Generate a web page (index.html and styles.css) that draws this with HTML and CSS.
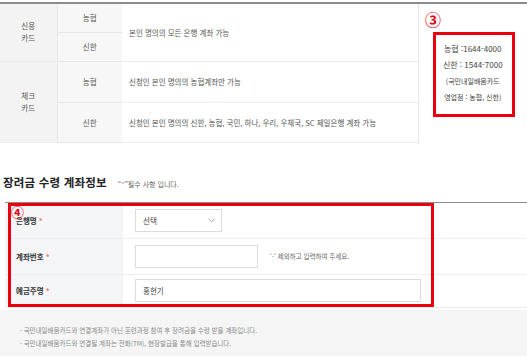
FILE: index.html
```html
<!DOCTYPE html>
<html lang="ko">
<head>
<meta charset="utf-8">
<link rel="stylesheet" href="styles.css">
</head>
<body>
<div class="page">
  <table class="card-table">
    <colgroup>
      <col class="c-cat"><col class="c-bank"><col class="c-desc"><col class="c-tel">
    </colgroup>
    <tr class="r1">
      <td class="cat" rowspan="2">신용<br>카드</td>
      <td class="bank">농협</td>
      <td class="desc" rowspan="2">본인 명의의 모든 은행 계좌 가능</td>
      <td class="tel" rowspan="4">
        <p class="tel-big">농협 :1644-4000</p>
        <p class="tel-big">신한 : 1544-7000</p>
        <p class="tel-small">(국민내일배움카드</p>
        <p class="tel-small">영업점 : 농협, 신한)</p>
      </td>
    </tr>
    <tr class="r2">
      <td class="bank">신한</td>
    </tr>
    <tr class="r3">
      <td class="cat" rowspan="2">체크<br>카드</td>
      <td class="bank">농협</td>
      <td class="desc">신청인 본인 명의의 농협계좌만 가능</td>
    </tr>
    <tr class="r4">
      <td class="bank">신한</td>
      <td class="desc">신청인 본인 명의의 신한, 농협, 국민, 하나, 우리, 우체국, SC 제일은행 계좌 가능</td>
    </tr>
  </table>

  <div class="section-head">
    <h2 class="title">장려금 수령 계좌정보</h2>
    <span class="req-note">“<span class="star">*</span>”필수 사항 입니다.</span>
  </div>

  <table class="form-table">
    <tr class="f1">
      <th>은행명 <span class="star">*</span></th>
      <td>
        <div class="select"><span>선택</span><svg class="chev" width="7" height="5" viewBox="0 0 7 5"><path d="M0.5 0.8 L3.5 3.8 L6.5 0.8" fill="none" stroke="#999" stroke-width="0.9"/></svg></div>
      </td>
    </tr>
    <tr class="f2">
      <th>계좌번호 <span class="star">*</span></th>
      <td>
        <div class="field-line"><div class="input acct"></div><span class="hint">'-' 제외하고 입력하여 주세요.</span></div>
      </td>
    </tr>
    <tr class="f3">
      <th>예금주명 <span class="star">*</span></th>
      <td>
        <div class="input name">홍현기</div>
      </td>
    </tr>
  </table>

  <div class="notice">
    <p>· 국민내일배움카드와 연결계좌가 아닌 훈련과정 참여 후 장려금을 수령 받을 계좌입니다.</p>
    <p>· 국민내일배움카드와 연결될 계좌는 전화(TM), 현장발급을 통해 입력받습니다.</p>
  </div>

  <span class="mark mark3">③</span>
  <div class="redbox box3"></div>
  <div class="redbox box4"></div>
  <span class="mark mark4">④</span>
</div>
</body>
</html>
```

FILE: styles.css
```css
html, body {
  margin: 0;
  padding: 0;
  background: #fff;
}
body {
  font-family: "Noto Sans CJK KR", "Noto Sans", sans-serif;
  color: #555;
}
.page {
  position: relative;
  width: 527px;
  height: 358px;
  overflow: hidden;
  padding-top: 2px;
  box-sizing: border-box;
}

/* top table */
.card-table {
  width: 527px;
  border-collapse: collapse;
  border-top: 2px solid #8c8c8c;
  table-layout: fixed;
  font-size: 7.5px;
}
.c-cat { width: 57px; }
.c-bank { width: 65px; }
.c-desc { width: 296px; }
.c-tel { width: 109px; }
.card-table td {
  padding: 0;
  vertical-align: middle;
  border-bottom: 1px solid #ececec;
}
.card-table tr.r1 { height: 29px; }
.card-table tr.r2 { height: 29px; }
.card-table tr.r3 { height: 41px; }
.card-table tr.r4 { height: 40px; }
.card-table .cat {
  background: #f3f3f3;
  text-align: center;
  line-height: 12px;
  border-right: 1px solid #e9e9e9;
}
.card-table .bank {
  background: #f7f7f7;
  text-align: center;
  border-bottom: 1px solid #e6e6e6;
}
.card-table .desc {
  padding-left: 7px;
  white-space: nowrap;
}
.card-table .tel {
  border-left: 1px solid #e6e6e6;
  border-bottom: none;
  text-align: center;
  color: #444;
}
.tel p { margin: 0; line-height: 16px; }
.tel-big { font-size: 8px; }
.tel-small { font-size: 7px; }

/* section head */
.section-head {
  display: flex;
  align-items: baseline;
  margin: 32px 0 13px 3px;
  height: 14px;
}
.title {
  margin: 0;
  font-size: 11.5px;
  line-height: 14px;
  font-weight: 700;
  color: #222;
  letter-spacing: 0.2px;
}
.req-note {
  margin-left: 11px;
  font-size: 7px;
  color: #666;
}
.star { color: #f0766e; }

/* form table */
.form-table {
  margin-left: 5px;
  width: 522px;
  border-collapse: collapse;
  border-top: 1px solid #8c8c8c;
  table-layout: fixed;
}
.form-table th {
  width: 107px;
  background: #f4f5f7;
  text-align: left;
  padding: 0 0 0 11px;
  font-size: 7.5px;
  font-weight: 700;
  color: #333;
  border-bottom: 1px solid #eeeeee;
}
.form-table td {
  padding: 0 0 0 12px;
  border-bottom: 1px solid #eeeeee;
}
.form-table tr.f1, .form-table tr.f2 { height: 36px; }
.form-table tr.f3 { height: 33px; }

.select {
  width: 87px;
  height: 23px;
  box-sizing: border-box;
  border: 1px solid #dcdcdc;
  display: flex;
  align-items: center;
  justify-content: space-between;
  padding: 0 6px 0 7px;
  font-size: 7.5px;
  color: #444;
}
.field-line {
  display: flex;
  align-items: center;
}
.input {
  height: 23px;
  box-sizing: border-box;
  border: 1px solid #dcdcdc;
  font-size: 7.5px;
  color: #444;
  display: flex;
  align-items: center;
  padding-left: 7px;
}
.input.acct { width: 123px; }
.input.name { width: 286px; }
.hint {
  margin-left: 12px;
  font-size: 6.5px;
  color: #666;
}

/* notice */
.notice {
  margin-top: 2px;
  height: 46px;
  background: #f5f5f5;
  padding: 14px 0 0 20px;
  box-sizing: border-box;
  font-size: 6.5px;
  color: #8a8a8a;
}
.notice p { margin: 0; line-height: 13px; }

/* annotations */
.redbox {
  position: absolute;
  border: 3px solid #e8000f;
  box-sizing: border-box;
}
.box3 { left: 433px; top: 32px; width: 82px; height: 85px; }
.box4 { left: 8px; top: 203px; width: 426px; height: 104px; }
.mark {
  position: absolute;
  color: #e8000f;
  font-weight: 700;
  line-height: 1;
}
.mark3 { left: 425px; top: 11px; font-size: 16px; }
.mark4 { left: 11px; top: 205px; font-size: 13px; }
```
